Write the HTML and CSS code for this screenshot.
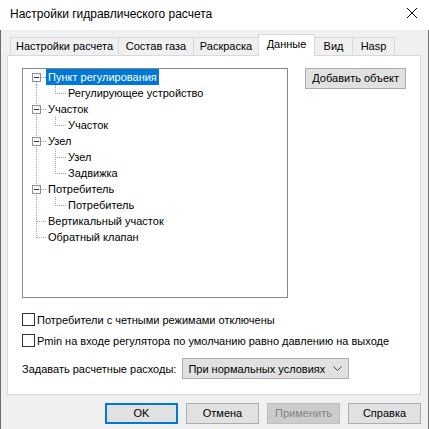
FILE: index.html
```html
<!DOCTYPE html>
<html lang="ru">
<head>
<meta charset="utf-8">
<title>Настройки гидравлического расчета</title>
<link rel="stylesheet" href="styles.css">
</head>
<body>
<div class="window">
  <div class="titlebar">
    <span class="title">Настройки гидравлического расчета</span>
    <svg class="close" width="12" height="12" viewBox="0 0 12 12"><path d="M1 1L11 11M11 1L1 11" stroke="#000" stroke-width="1" fill="none"/></svg>
  </div>
  <div class="body">
    <div class="tabs">
      <div class="tab t1">Настройки расчета</div>
      <div class="tab t2">Состав газа</div>
      <div class="tab t3">Раскраска</div>
      <div class="tab t4 active">Данные</div>
      <div class="tab t5">Вид</div>
      <div class="tab t6">Hasp</div>
    </div>
    <div class="panel">
      <div class="top">
        <div class="tree">
          <div class="row">
            <svg class="g-root" width="23" height="16"><path class="dot" d="M13.5 13v3"/><rect class="xbox" x="9.5" y="4.5" width="8" height="8"/><path class="minus" d="M11 8.5h5"/><path class="dot" d="M18 8.5h5"/></svg>
            <span class="label sel">Пункт регулирования</span>
          </div>
          <div class="row">
            <svg class="g-child" width="43" height="16"><path class="dot" d="M13.5 0v16"/><path class="dot" d="M32.5 0v9"/><path class="dot" d="M34 8.5h9"/></svg>
            <span class="label">Регулирующее устройство</span>
          </div>
          <div class="row">
            <svg class="g-root" width="23" height="16"><path class="dot" d="M13.5 0v16"/><rect class="xbox" x="9.5" y="4.5" width="8" height="8"/><path class="minus" d="M11 8.5h5"/><path class="dot" d="M18 8.5h5"/></svg>
            <span class="label">Участок</span>
          </div>
          <div class="row">
            <svg class="g-child" width="43" height="16"><path class="dot" d="M13.5 0v16"/><path class="dot" d="M32.5 0v9"/><path class="dot" d="M34 8.5h9"/></svg>
            <span class="label">Участок</span>
          </div>
          <div class="row">
            <svg class="g-root" width="23" height="16"><path class="dot" d="M13.5 0v16"/><rect class="xbox" x="9.5" y="4.5" width="8" height="8"/><path class="minus" d="M11 8.5h5"/><path class="dot" d="M18 8.5h5"/></svg>
            <span class="label">Узел</span>
          </div>
          <div class="row">
            <svg class="g-child" width="43" height="16"><path class="dot" d="M13.5 0v16"/><path class="dot" d="M32.5 0v16"/><path class="dot" d="M34 8.5h9"/></svg>
            <span class="label">Узел</span>
          </div>
          <div class="row">
            <svg class="g-child" width="43" height="16"><path class="dot" d="M13.5 0v16"/><path class="dot" d="M32.5 0v9"/><path class="dot" d="M34 8.5h9"/></svg>
            <span class="label">Задвижка</span>
          </div>
          <div class="row">
            <svg class="g-root" width="23" height="16"><path class="dot" d="M13.5 0v16"/><rect class="xbox" x="9.5" y="4.5" width="8" height="8"/><path class="minus" d="M11 8.5h5"/><path class="dot" d="M18 8.5h5"/></svg>
            <span class="label">Потребитель</span>
          </div>
          <div class="row">
            <svg class="g-child" width="43" height="16"><path class="dot" d="M13.5 0v16"/><path class="dot" d="M32.5 0v9"/><path class="dot" d="M34 8.5h9"/></svg>
            <span class="label">Потребитель</span>
          </div>
          <div class="row">
            <svg class="g-root" width="23" height="16"><path class="dot" d="M13.5 0v16"/><path class="dot" d="M14 8.5h9"/></svg>
            <span class="label">Вертикальный участок</span>
          </div>
          <div class="row">
            <svg class="g-root" width="23" height="16"><path class="dot" d="M13.5 0v9"/><path class="dot" d="M14 8.5h9"/></svg>
            <span class="label">Обратный клапан</span>
          </div>
        </div>
        <div class="btn add">Добавить объект</div>
      </div>
      <div class="check c1"><span class="cbox"></span><span>Потребители с четными режимами отключены</span></div>
      <div class="check c2"><span class="cbox"></span><span>Pmin на входе регулятора по умолчанию равно давлению на выходе</span></div>
      <div class="combo-row">
        <span class="combo-label">Задавать расчетные расходы:</span>
        <div class="combo"><span>При нормальных условиях</span><svg width="9" height="5" viewBox="0 0 9 5"><polyline points="0.5,0.5 4.5,4.5 8.5,0.5" fill="none" stroke="#444" stroke-width="1"/></svg></div>
      </div>
    </div>
    <div class="buttons">
      <div class="btn dlg default">OK</div>
      <div class="btn dlg">Отмена</div>
      <div class="btn dlg disabled">Применить</div>
      <div class="btn dlg">Справка</div>
    </div>
  </div>
</div>
</body>
</html>
```

FILE: styles.css
```css
html, body {
  margin: 0;
  padding: 0;
}
body {
  width: 429px;
  height: 429px;
  overflow: hidden;
  font-family: "Liberation Sans", Arial, sans-serif;
  font-size: 11px;
  color: #000;
}
.window {
  width: 429px;
  height: 429px;
  display: flex;
  flex-direction: column;
  background: #f0f0f0;
}
.titlebar {
  height: 30px;
  flex: none;
  background: #fff;
  display: flex;
  align-items: center;
  justify-content: space-between;
  padding: 0 11px 0 10px;
  box-sizing: border-box;
}
.title {
  font-size: 12px;
  margin-top: -2px;
}
.close {
  display: block;
  margin-top: -5px;
}
.body {
  flex: 1;
  border-left: 1px solid #6d6d6d;
  border-right: 1px solid #6d6d6d;
  padding: 4px 7px 0 6px;
  display: flex;
  flex-direction: column;
}
.tabs {
  height: 21px;
  display: flex;
  align-items: flex-end;
  padding-left: 3px;
  flex: none;
}
.tab {
  height: 18px;
  box-sizing: border-box;
  border: 1px solid #d9d9d9;
  border-bottom: none;
  background: #f0f0f0;
  margin-left: -1px;
  text-align: center;
  line-height: 17px;
  white-space: nowrap;
}
.t1 { width: 109px; margin-left: 0; }
.t2 { width: 76px; }
.t3 { width: 66px; }
.t4 { width: 57px; }
.t5 { width: 39px; }
.t6 { width: 43px; }
.tab.active {
  height: 22px;
  background: #fff;
  margin-bottom: -1px;
  position: relative;
  z-index: 1;
  line-height: 19px;
}
.panel {
  height: 340px;
  box-sizing: border-box;
  border: 1px solid #d9d9d9;
  background: #fff;
  padding: 12px 14px 0 14px;
  display: flex;
  flex-direction: column;
  flex: none;
}
.top {
  display: flex;
  align-items: flex-start;
}
.tree {
  width: 267px;
  height: 230px;
  box-sizing: border-box;
  border: 1px solid #828790;
  background: #fff;
  display: flex;
  flex-direction: column;
}
.row {
  height: 16px;
  display: flex;
  align-items: center;
}
.row svg {
  display: block;
  flex: none;
  shape-rendering: crispEdges;
}
.dot {
  stroke: #a0a0a0;
  stroke-width: 1;
  stroke-dasharray: 1 1;
  fill: none;
}
.xbox {
  fill: #f7f7f7;
  stroke: #8e8f8f;
  stroke-width: 1;
}
.minus {
  stroke: #1e395b;
  stroke-width: 1;
  fill: none;
}
.label {
  height: 16px;
  line-height: 16px;
  padding: 0 2px;
  white-space: nowrap;
}
.label.sel {
  background: #0078d7;
  color: #fff;
}
.btn {
  box-sizing: border-box;
  background: #e1e1e1;
  border: 1px solid #adadad;
  text-align: center;
  white-space: nowrap;
}
.add {
  width: 101px;
  height: 21px;
  line-height: 19px;
  margin-left: 17px;
}
.check {
  display: flex;
  align-items: center;
  height: 13px;
  gap: 2px;
}
.c1 { margin-top: 15px; }
.c2 { margin-top: 8px; }
.cbox {
  width: 13px;
  height: 13px;
  box-sizing: border-box;
  border: 1px solid #333;
  background: #fff;
  flex: none;
}
.combo-row {
  margin-top: 11px;
  display: flex;
  align-items: center;
  gap: 6px;
}
.combo {
  width: 167px;
  height: 21px;
  box-sizing: border-box;
  background: #e1e1e1;
  border: 1px solid #adadad;
  display: flex;
  align-items: center;
  justify-content: space-between;
  padding: 0 6px 0 5px;
}
.combo svg {
  display: block;
}
.buttons {
  margin-top: 8px;
  display: flex;
  justify-content: flex-end;
  gap: 8px;
}
.dlg {
  width: 73px;
  height: 21px;
  line-height: 19px;
}
.dlg.default {
  border: 2px solid #0078d7;
  line-height: 17px;
}
.dlg.disabled {
  background: #cccccc;
  border-color: #bfbfbf;
  color: #838383;
}
```
